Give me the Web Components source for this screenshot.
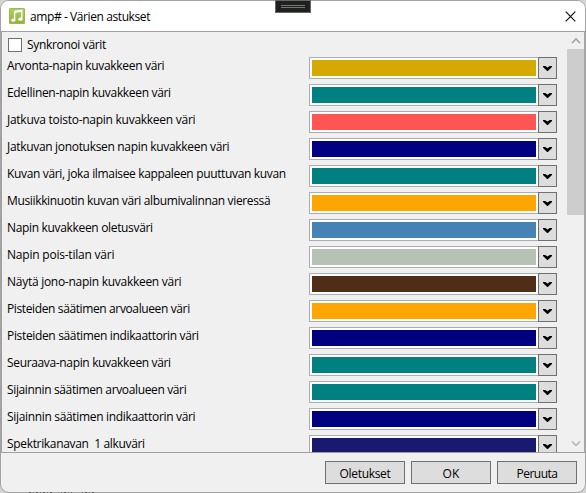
<!DOCTYPE html>
<html lang="fi"><head><meta charset="utf-8"><title>amp# - Värien astukset</title>
<style>
html,body{margin:0;width:586px;height:493px;overflow:hidden;background:#d4d4d4}
body{font:12px "Open Sans","Noto Sans",sans-serif;color:#000}
</style></head><body><color-dialog></color-dialog>
<script>
const define=(name,html,init)=>customElements.define(name,class extends HTMLElement{
  connectedCallback(){
    if(this.shadowRoot)return;
    const t=document.createElement('template');t.innerHTML=html;
    this.attachShadow({mode:'open'}).append(t.content.cloneNode(true));
    if(init)init(this,this.shadowRoot);
  }
});
// Text run whose tracking is adjusted to the given advance width.
define('fit-text',`<style>:host{display:inline-block;white-space:pre;line-height:16px}span{display:inline-block}</style><span><slot></slot></span>`,(el,r)=>{
  const s=r.querySelector('span'),n=el.textContent.length;
  s.style.letterSpacing=((+el.getAttribute('w')-s.getBoundingClientRect().width)/n)+'px';
});
define('app-icon',`<style>:host{display:block;width:16px;height:16px}svg{display:block}</style>
<svg width="16" height="16" viewBox="0 0 16 16"><defs><linearGradient id="g" x2="0" y2="1"><stop stop-color="#b3cf5c"/><stop offset="1" stop-color="#8fb339"/></linearGradient></defs>
<rect width="16" height="16" rx="1.5" fill="url(#g)"/><rect x=".5" y=".5" width="15" height="15" rx="1" fill="none" stroke="#9dbb4c"/>
<path d="M5.6 12V3.6l7.2-1.2V11" fill="none" stroke="#fff" stroke-width="1.4"/><path d="M5.6 4l7.2-1.2" stroke="#fff" stroke-width="2"/><ellipse cx="4.3" cy="12.2" rx="2.1" ry="1.6" fill="#fff"/><ellipse cx="11.4" cy="11.2" rx="2.1" ry="1.6" fill="#fff"/></svg>`);
define('title-bar',`<style>:host{display:flex;flex:none;height:30px;padding:0 9px 0 8px;background:#fff;align-items:center}fit-text{margin:1px 0 0 5px}.x{margin-left:auto;display:block}</style>
<app-icon></app-icon><fit-text w="120">amp# - Värien astukset</fit-text>
<svg class="x" width="11" height="11" viewBox="0 0 11 11"><path d="M.7.7l9.6 9.6M10.3.7L.7 10.3" stroke="#111" stroke-width="1.2"/></svg>`);
define('grab-handle',`<style>:host{position:absolute;left:275px;top:0;width:36px;height:13px;box-sizing:border-box;border:1px solid #666866;background:#1f211f;padding:4px 5px}i{display:block;height:1px;background:#777;margin-bottom:1px}</style><i></i><i></i>`);
define('check-row',`<style>:host{display:flex;height:25px;padding:6px 0 0 6px;box-sizing:border-box}i{width:12px;height:12px;background:#fff;border:1px solid #707070;margin-right:5px}fit-text{margin-top:-1px}</style><i></i><fit-text w="79">Synkronoi värit</fit-text>`);
define('color-combo',`<style>:host{display:flex;width:248px;height:22px}.f{flex:1;box-sizing:border-box;border:1px solid #abadb3;border-right:0;background:#fff;padding:2px}.c{height:16px;background:var(--c)}.b{box-sizing:border-box;width:19px;border:1px solid #707070;background:#ddd;display:flex;align-items:center;justify-content:center}</style>
<div class="f"><div class="c"></div></div><div class="b"><svg width="9" height="5" viewBox="0 0 9 5"><path d="M0 0h2.2l2.3 1.6L6.8 0H9v1L4.9 5h-.8L0 1z"/></svg></div>`);
define('color-row',`<style>:host{display:flex;justify-content:space-between;height:27px}fit-text{margin:1px 0 0 5px}</style><fit-text></fit-text><color-combo></color-combo>`,(el,r)=>{
  const old=r.querySelector('fit-text'),t=document.createElement('fit-text');
  t.setAttribute('w',el.getAttribute('w')-.7);t.textContent=el.textContent;old.replaceWith(t);
  r.querySelector('color-combo').style.setProperty('--c',el.getAttribute('c'));
});
define('scroll-bar',`<style>:host{display:flex;flex-direction:column;width:17px;align-items:center}svg{flex:none;height:17px}.t{width:17px;height:166px;background:#cdcdcd;margin-bottom:auto}</style>
<svg width="17" viewBox="0 0 17 17"><path d="M5 11l4-4 4 4" fill="none" stroke="#a3a3a3" stroke-width="1.6"/></svg><div class="t"></div><svg width="17" viewBox="0 0 17 17"><path d="M5 6.5l4 4 4-4" fill="none" stroke="#b0b0b0" stroke-width="1.3"/></svg>`);
define('push-button',`<style>:host{display:flex;box-sizing:border-box;width:80px;height:23px;border:1px solid #707070;background:#ddd;align-items:center;justify-content:center;padding-top:3px}</style><slot></slot>`);
const rows=[['Arvonta-napin kuvakkeen väri',158,'#d4aa00'],['Edellinen-napin kuvakkeen väri',164.5,'#008080'],['Jatkuva toisto-napin kuvakkeen väri',189,'#ff5555'],['Jatkuvan jonotuksen napin kuvakkeen väri',223,'#000080'],['Kuvan väri, joka ilmaisee kappaleen puuttuvan kuvan',279.5,'#008080'],['Musiikkinuotin kuvan väri albumivalinnan vieressä',264,'#ffa500'],['Napin kuvakkeen oletusväri',146.5,'#4682b4'],['Napin pois-tilan väri',108,'#b7c2b7'],['Näytä jono-napin kuvakkeen väri',175,'#502d16'],['Pisteiden säätimen arvoalueen väri',183.5,'#ffa500'],['Pisteiden säätimen indikaattorin väri',192.5,'#000080'],['Seuraava-napin kuvakkeen väri',164.5,'#008080'],['Sijainnin säätimen arvoalueen väri',180,'#008080'],['Sijainnin säätimen indikaattorin väri',189,'#000080'],['Spektrikanavan  1 alkuväri',138.5,'#191970']];
define('color-dialog',`<style>
:host{display:block;position:relative;box-sizing:border-box;width:586px;height:493px}
.w{box-sizing:border-box;height:493px;border:1px solid #a3a3a3;border-radius:9px;background:#f0f0f0;overflow:hidden;display:flex;flex-direction:column}
.p{box-sizing:border-box;height:421px;flex:none;border:1px solid #a0a0a0;border-right-color:#a8a8a8;border-bottom:0;display:flex;overflow:hidden}
.l{width:555px;flex:none}scroll-bar{margin-left:auto}
.a{box-sizing:border-box;flex:none;border-top:1px solid #a0a0a0;height:40px;display:flex;justify-content:flex-end;gap:6px;padding:8px 8px 0 0}
/* Sliver of the window behind, showing under the bottom edge. */
.s{position:absolute;left:29px;top:492px;width:66px;height:1px;background:repeating-linear-gradient(90deg,#555 0 2px,#a3a3a3 2px 4px,#666 4px 5px,#a3a3a3 5px 7px);clip-path:polygon(0 0,35% 0,35% 1px,45% 1px,45% 0,65% 0,65% 1px,80% 1px,80% 0,100% 0,100% 1px,0 1px)}
</style><div class="w"><title-bar></title-bar><div class="p"><div class="l"><check-row></check-row></div><scroll-bar></scroll-bar></div>
<div class="a"><push-button><fit-text w="51">Oletukset</fit-text></push-button><push-button><fit-text w="17">OK</fit-text></push-button><push-button><fit-text w="41">Peruuta</fit-text></push-button></div></div><div class="s"></div><grab-handle></grab-handle>`,(el,r)=>{
  const l=r.querySelector('.l');
  for(const [t,w,c] of rows){const e=document.createElement('color-row');e.textContent=t;e.setAttribute('w',w);e.setAttribute('c',c);l.append(e);}
});
</script></body></html>
